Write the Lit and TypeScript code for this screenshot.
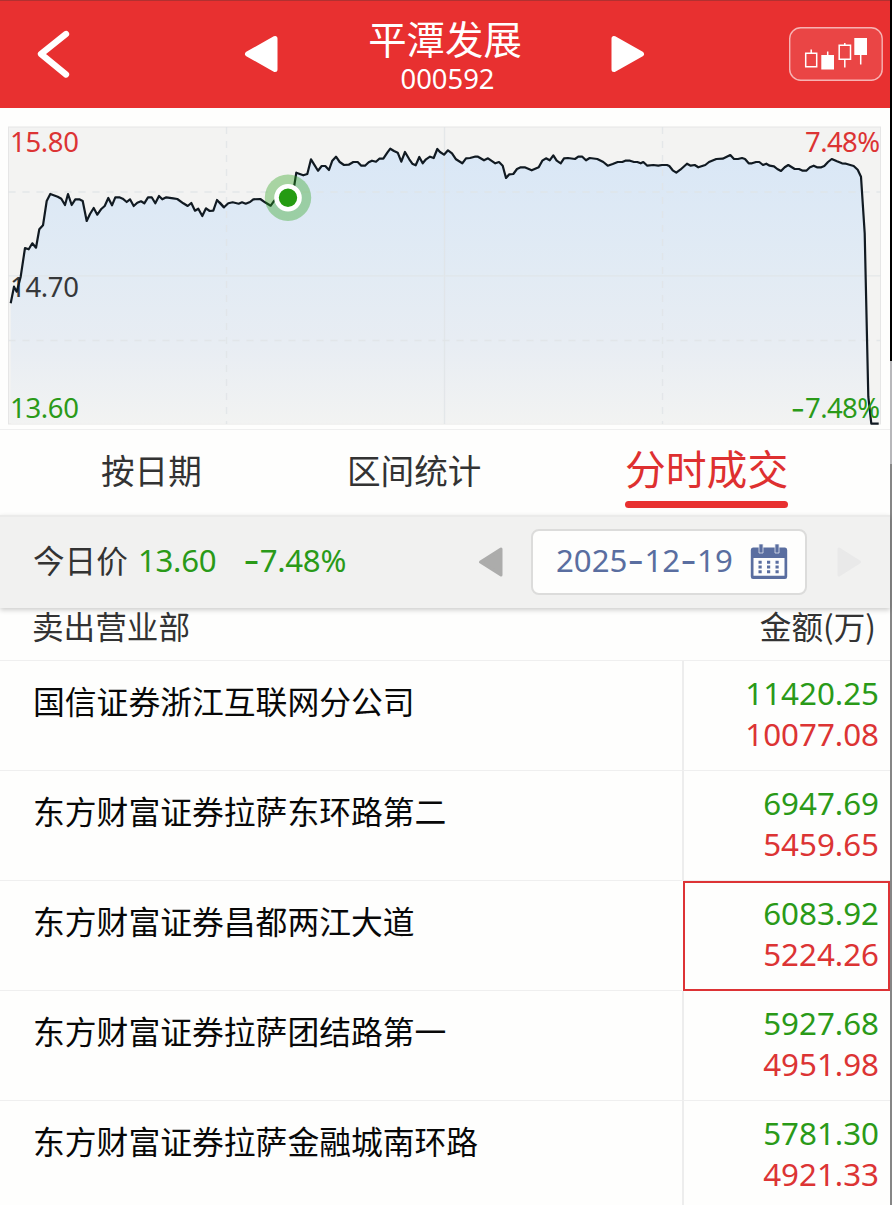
import { LitElement, html, svg, css } from "lit";
import { customElement } from "lit/decorators.js";
import { classMap } from "lit/directives/class-map.js";

// Intraday price trace, in thirds of a pixel, split in four sessions: [x offset, points].
const SESSIONS: [number, string][] = [
  [0, "32,550 42,500 50,515 62,470 75,384 86,388 97,370 108,383 118,328 129,316 140,243 151,222 173,230 184,236 195,255 204,222 215,255 226,238 238,238 248,243 260,303 270,282 281,264 292,284 303,268 314,258 325,234 336,256 346,232 358,232 368,236 380,246 390,238 401,258 412,248 423,244 433,250 444,232 455,232 466,250 477,228 487,238 499,232 520,235 532,237 550,250 563,258 574,249 585,272 595,266 607,288 618,265 629,273 640,272 651,240 671,262"],
  [660, "0,248 12,262 25,250 38,247 56,251 66,247 77,251 90,246 100,238 121,237 135,247 152,257 163,242 205,233 220,215 229,158 250,166 262,162 273,118 284,136 294,152 305,138 316,138 327,150 337,122 348,110 359,126 372,135 386,134 400,126 413,126 424,137 435,137 446,127 456,122 468,125 478,116 490,116 502,98 511,86 522,93 533,98 544,125 555,96 568,118 577,131 587,136 598,111 608,130 618,118 630,110 641,114 652,87"],
  [1320, "0,96 12,104 24,91 36,100 48,118 67,130 78,115 90,114 104,110 114,110 132,121 144,115 166,130 177,126 188,137 198,174 208,163 220,162 231,147 242,142 254,142 275,151 296,142 307,122 318,115 329,121 340,106 350,122 362,130 372,115 384,114 405,117 415,110 427,110 438,121 449,114 472,117 490,126 503,137 518,132 533,126 547,126 556,122 570,122 582,126 592,126 602,130 610,126 622,137 640,135 655,137"],
  [1986, "0,135 15,135 22,138 32,151 43,158 55,149 75,131 86,137 98,135 109,142 130,135 141,126 163,117 182,116 205,105 216,117 228,117 240,114 249,117 260,130 270,130 282,126 292,126 303,135 313,131 323,137 336,139 346,147 357,153 368,142 379,135 398,147 411,147 422,152 433,152 444,142 455,137 465,142 478,142 487,138 498,126 509,117 525,124 540,130 552,131 575,138 587,149 597,170 608,340 619,830 628,911 650,911"],
];

const TRACE = SESSIONS.flatMap(([dx, pts]) =>
  pts.split(" ").map((p) => {
    const [x, y] = p.split(",").map(Number);
    return `${((x + dx) / 3).toFixed(1)},${(y / 3 + 120).toFixed(1)}`;
  })
).join(" ");

const SELLERS = [
  { name: "国信证券浙江互联网分公司", sell: "11420.25", net: "10077.08", marked: false },
  { name: "东方财富证券拉萨东环路第二", sell: "6947.69", net: "5459.65", marked: false },
  { name: "东方财富证券昌都两江大道", sell: "6083.92", net: "5224.26", marked: true },
  { name: "东方财富证券拉萨团结路第一", sell: "5927.68", net: "4951.98", marked: false },
  { name: "东方财富证券拉萨金融城南环路", sell: "5781.30", net: "4921.33", marked: false },
];

@customElement("price-chart")
export class PriceChart extends LitElement {
  static styles = css`
    :host { display: block; height: 322px; border-bottom: 1px solid #efefef; box-sizing: border-box; }
    svg { display: block; }
    text { font: 27.5px "Noto Sans", "Noto Sans CJK SC", sans-serif; }
    .minus { font: 32px Inter, sans-serif; }
    .grid { stroke: #e0e4e6; stroke-opacity: .8; stroke-width: 1.3; fill: none; }
    .dashed { stroke-dasharray: 7 7; }
    .red { fill: #dc3434; }
    .green { fill: #2a9a18; }
    .dark { fill: #36383a; }
  `;
  render() {
    return html`<svg width="890" height="321" viewBox="0 108 890 321">
      <defs>
        <linearGradient id="area" gradientUnits="userSpaceOnUse" x1="0" y1="148" x2="0" y2="424">
          <stop offset="0" stop-color="#d9e7f6" />
          <stop offset=".45" stop-color="#e2ebf4" />
          <stop offset=".72" stop-color="#e8edf3" />
          <stop offset="1" stop-color="#f2f3f2" />
        </linearGradient>
      </defs>
      ${svg`
        <rect x="8.5" y="127" width="872" height="297" fill="#f3f3f2" stroke="#e6e6e6" />
        <polygon points="${TRACE} 10.7,423.7" fill="url(#area)" />
        <path class="grid" d="M8.5 275.8H880.5M444.5 127V424" />
        <path class="grid dashed" d="M8.5 192H880.5M8.5 340.5H880.5M226.5 127V424M662.5 127V424" />
        <text class="dark" x="10" y="297" textLength="69">14.70</text>
        <polyline points="${TRACE}" fill="none" stroke="#111a22" stroke-width="2.2" stroke-linejoin="round" />
        <circle cx="288" cy="197.7" r="23.2" fill="#2a9f18" fill-opacity=".37" />
        <circle cx="288" cy="197.7" r="11.5" fill="#259b12" stroke="#fff" stroke-width="4.6" />
        <text class="red" x="10" y="152" textLength="69">15.80</text>
        <text class="green" x="10" y="418" textLength="69">13.60</text>
        <text class="red" x="805" y="152" textLength="75">7.48%</text>
        <text class="green" x="805" y="418" textLength="75">7.48%</text>
        <text class="green minus" x="790.500" y="420">-</text>
      `}
    </svg>`;
  }
}

@customElement("app-root")
export class AppRoot extends LitElement {
  static styles = css`
    :host {
      display: flex; width: 892px; height: 1205px; overflow: hidden;
      background: #fefefd; color: #333;
      font-family: "Noto Sans", "Noto Sans CJK SC", sans-serif;
    }
    svg { display: block; flex: none; }
    .page { width: 890px; flex: none; }
    .edge { width: 2px; flex: none; background: linear-gradient(#000 361px, #b7b7ba 361px 464px, #868686 464px); }
    .cjk { font-family: "Noto Sans CJK SC", sans-serif; }
    .top {
      height: 108px; box-sizing: border-box; border-top: 1px solid #b23030; padding-bottom: 2px;
      background: #e83030; color: #fff;
      display: grid; grid-template-columns: 240px 100px 266px 54px 128px 102px; align-items: center;
    }
    .back { padding-left: 34px; }
    .title { text-align: center; padding: 0 56px 0 0; }
    .name { font-size: 38.4px; line-height: 46px; }
    .code { font-size: 27.4px; line-height: 30px; margin-top: 4px; padding-left: 5px; }
    .tabs { height: 85px; display: flex; align-items: center; font-size: 33.6px; white-space: nowrap; }
    .tab { line-height: 50px; padding-bottom: 5px; }
    .first { margin-left: 101px; width: 246px; }
    .second { width: 278px; }
    .active {
      width: 163px; height: 78px; padding: 0; font-size: 40.8px; line-height: 75px;
      color: #de3030; align-self: flex-start;
    }
    .active::after { content: ""; display: block; height: 7px; margin-top: -4px; border-radius: 4px; background: #e83030; }
    .today {
      height: 93px; box-sizing: border-box; background: #f1f1f0; border-top: 2px solid #ebebea;
      padding-bottom: 2px; box-shadow: 0 2px 5px #0003; position: relative;
      display: flex; align-items: center; font-size: 31.2px; color: #333;
    }
    .label { margin: -6px 0 0 33px; width: 105px; font-size: 31.6px; }
    .num { margin-top: -4px; line-height: 42px; color: #2a9a18; white-space: nowrap; letter-spacing: -.3px; }
    .price { width: 105px; }
    .change { width: 235px; }
    .dash { font-family: Inter, sans-serif; font-size: 37px; line-height: 30px; vertical-align: -2px; }
    .date {
      width: 276px; height: 66px; box-sizing: border-box; margin: 0 30px 0 28px; padding: 0 17px 0 23px;
      border: 2px solid #dcdcdb; border-radius: 8px; background: #fefefd; color: #5a6ea0;
      display: flex; align-items: center; justify-content: space-between; white-space: nowrap;
    }
    .day { margin-top: -4px; line-height: 42px; }
    .heads {
      height: 53px; box-sizing: border-box; border-bottom: 1px solid #efefef; padding: 0 14px 18px 32px;
      display: flex; justify-content: space-between; align-items: center; font-size: 31.6px; line-height: 34px;
    }
    .row { display: grid; grid-template-columns: 682px 208px; height: 110px; }
    .seller { border-bottom: 1px solid #efefef; padding: 15px 0 0 33px; font-size: 31.8px; line-height: 48px; color: #080808; }
    .amounts {
      border-left: 2px solid #ededed; border-bottom: 1px solid #efefef; box-sizing: border-box;
      padding: 12px 11px 0 0; text-align: right; font-size: 31.3px; line-height: 41px;
    }
    .marked { border: 2px solid #dd3335; margin-left: 1px; padding: 10px 9px 0 0; }
    .green { color: #2a9a18; }
    .red { color: #dc3434; }
  `;
  render() {
    return html`
      <main class="page">
        <header class="top">
          <div class="back"><svg width="40" height="54" viewBox="34 27 40 54"><path d="M66 34L41 54L66 74.5" fill="none" stroke="#fff" stroke-width="6.3" stroke-linecap="round" stroke-linejoin="round" /></svg></div>
          <svg width="44" height="48" viewBox="240 30 44 48"><path d="M247.5 54L275 38.5V69.5Z" fill="#fff" stroke="#fff" stroke-width="5" stroke-linejoin="round" /></svg>
          <div class="title">
            <div class="name cjk">平潭发展</div>
            <div class="code">000592</div>
          </div>
          <svg width="44" height="48" viewBox="606 30 44 48"><path d="M641.5 54L614 38.5V69.5Z" fill="#fff" stroke="#fff" stroke-width="5" stroke-linejoin="round" /></svg>
          <span></span>
          <svg width="96" height="56" viewBox="788 26 96 56">
            <rect x="789.7" y="27.7" width="92.5" height="52.5" rx="11" fill="#fff" fill-opacity=".1" stroke="#f7b3b3" stroke-width="1.4" />
            <path d="M805.7 53.3h11v13.5h-11zM811.2 49.5v3.8M839.2 45.3h11.3v14h-11.3zM844.8 43v2.3M844.8 59.3V67.5" fill="none" stroke="#fff" stroke-width="1.5" />
            <path d="M821.3 55h12.7v14.5h-12.7zM854.3 38h12.7v17h-12.7z" fill="#fff" />
            <path d="M827.7 51.5V56M860.7 55V64.5" stroke="#fff" stroke-width="1.5" />
          </svg>
        </header>
        <price-chart></price-chart>
        <nav class="tabs cjk">
          <div class="tab first">按日期</div>
          <div class="tab second">区间统计</div>
          <div class="tab active">分时成交</div>
        </nav>
        <section class="today">
          <span class="label cjk">今日价</span>
          <span class="num price">13.60</span>
          <span class="num change"><span class="dash">-</span>7.48%</span>
          <svg width="25" height="34" viewBox="0 0 25 34"><path d="M2.5 17L23 4V30Z" fill="#acacab" stroke="#acacab" stroke-width="3" stroke-linejoin="round" /></svg>
          <div class="date">
            <span class="day">2025<span class="dash">-</span>12<span class="dash">-</span>19</span>
            <svg width="38" height="36" viewBox="0 0 38 36">
              <path fill-rule="evenodd" d="M3 3.5H35Q37.2 3.5 37.2 6V32.500Q37.200 35 35 35H3Q.8 35 .8 32.500V6Q.8 3.500 3 3.500ZM3.500 14V31.800H34.500V14Z" fill="#5a6ea0" />
              <path d="M9 0h4v9H9zM25 0h4v9h-4z" fill="#5a6ea0" stroke="#dfe3ee" stroke-width=".8" />
              <path d="M8.500 18.200h22M8.500 23h22M8.500 27.700h22" stroke="#5a6ea0" stroke-width="3" stroke-dasharray="3.200 5.300" />
            </svg>
          </div>
          <svg width="25" height="34" viewBox="0 0 25 34"><path d="M22.500 17L2 4V30Z" fill="#e9e9e9" stroke="#e9e9e9" stroke-width="3" stroke-linejoin="round" /></svg>
        </section>
        <div class="heads cjk"><span>卖出营业部</span><span>金额(万)</span></div>
        ${SELLERS.map(
          (s) => html`<div class="row">
            <div class="seller cjk">${s.name}</div>
            <div class=${classMap({ amounts: true, marked: s.marked })}>
              <div class="green">${s.sell}</div>
              <div class="red">${s.net}</div>
            </div>
          </div>`
        )}
      </main>
      <div class="edge"></div>
    `;
  }
}
